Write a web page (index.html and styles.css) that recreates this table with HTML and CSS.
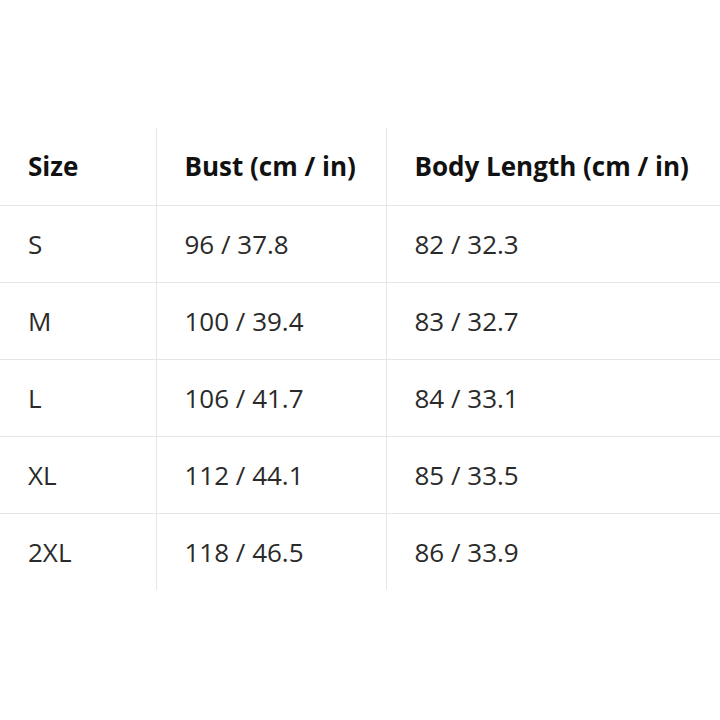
FILE: index.html
```html
<!DOCTYPE html>
<html>
<head>
<meta charset="utf-8">
<link rel="stylesheet" href="styles.css">
</head>
<body>
<table class="size-table">
  <colgroup><col class="c1"><col class="c2"><col class="c3"></colgroup>
  <thead>
    <tr><th>Size</th><th>Bust (cm / in)</th><th>Body Length (cm / in)</th></tr>
  </thead>
  <tbody>
    <tr><td>S</td><td>96 / 37.8</td><td>82 / 32.3</td></tr>
    <tr><td>M</td><td>100 / 39.4</td><td>83 / 32.7</td></tr>
    <tr><td>L</td><td>106 / 41.7</td><td>84 / 33.1</td></tr>
    <tr><td>XL</td><td>112 / 44.1</td><td>85 / 33.5</td></tr>
    <tr><td>2XL</td><td>118 / 46.5</td><td>86 / 33.9</td></tr>
  </tbody>
</table>
</body>
</html>
```
FILE: styles.css
```css
html, body { margin: 0; padding: 0; background: #fff; }
body { font-family: "Open Sans", "Noto Sans", sans-serif; }
.size-table {
  margin-top: 128px;
  width: 720px;
  border-collapse: collapse;
  table-layout: fixed;
}
.c1 { width: 156px; }
.c2 { width: 230px; }
.c3 { width: 334px; }
.size-table th, .size-table td {
  height: 77px;
  box-sizing: border-box;
  padding: 0 0 0 28px;
  text-align: left;
  vertical-align: middle;
  font-size: 26px;
  white-space: nowrap;
  border-left: 1px solid #e6e6e6;
  border-bottom: 1px solid #e6e6e6;
}
.size-table th:first-child, .size-table td:first-child { border-left: none; }
.size-table tbody tr:last-child td { border-bottom: none; }
.size-table th { font-weight: 700; color: #111; }
.size-table td { font-weight: 400; color: #2a2a2a; }
```
